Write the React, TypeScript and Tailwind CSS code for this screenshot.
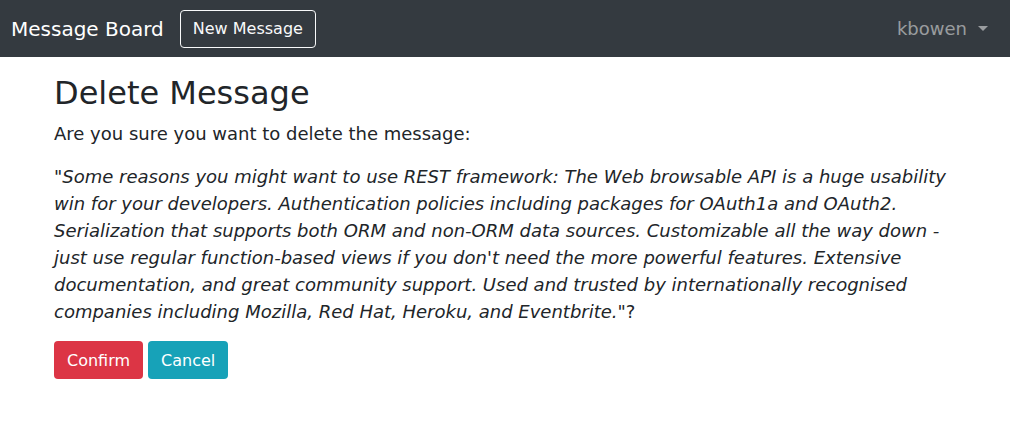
import React from 'react';

const quote =
  '"Some reasons you might want to use REST framework: The Web browsable API is a huge usability win for your developers. Authentication policies including packages for OAuth1a and OAuth2. Serialization that supports both ORM and non-ORM data sources. Customizable all the way down - just use regular function-based views if you don\'t need the more powerful features. Extensive documentation, and great community support. Used and trusted by internationally recognised companies including Mozilla, Red Hat, Heroku, and Eventbrite."';

export default function App() {
  return (
    <div className="min-h-[433px] bg-white font-['DejaVu_Sans',sans-serif] text-[#212529]">
      {/* Navbar */}
      <nav className="flex h-[57px] items-center bg-[#343a40] pl-[11px] pr-[22px]">
        <span className="mr-4 text-[20px] text-white">Message Board</span>
        <button className="h-[38px] rounded border border-[#f8f9fa] px-3 text-[16px] text-[#f8f9fa]">
          New Message
        </button>
        <div className="ml-auto flex items-center text-[18px] text-[#ffffff80]">
          kbowen
          <span className="ml-[11px] inline-block h-0 w-0 border-x-[5px] border-t-[5px] border-x-transparent border-t-[#ffffff80]" />
        </div>
      </nav>

      {/* Content */}
      <div className="pl-[54px] pr-[40px] pt-[17px] text-[18px] leading-[27px]">
        <h1 className="mb-2 text-[32px] leading-[1.2]">Delete Message</h1>
        <p className="mb-4">Are you sure you want to delete the message:</p>
        <p className="mb-4">
          <em>{quote}</em>?
        </p>
        <div className="flex gap-[5px]">
          <button className="h-[38px] rounded bg-[#dc3545] px-[13px] text-[16px] text-white">Confirm</button>
          <button className="h-[38px] rounded bg-[#17a2b8] px-[13px] text-[16px] text-white">Cancel</button>
        </div>
      </div>
    </div>
  );
}
